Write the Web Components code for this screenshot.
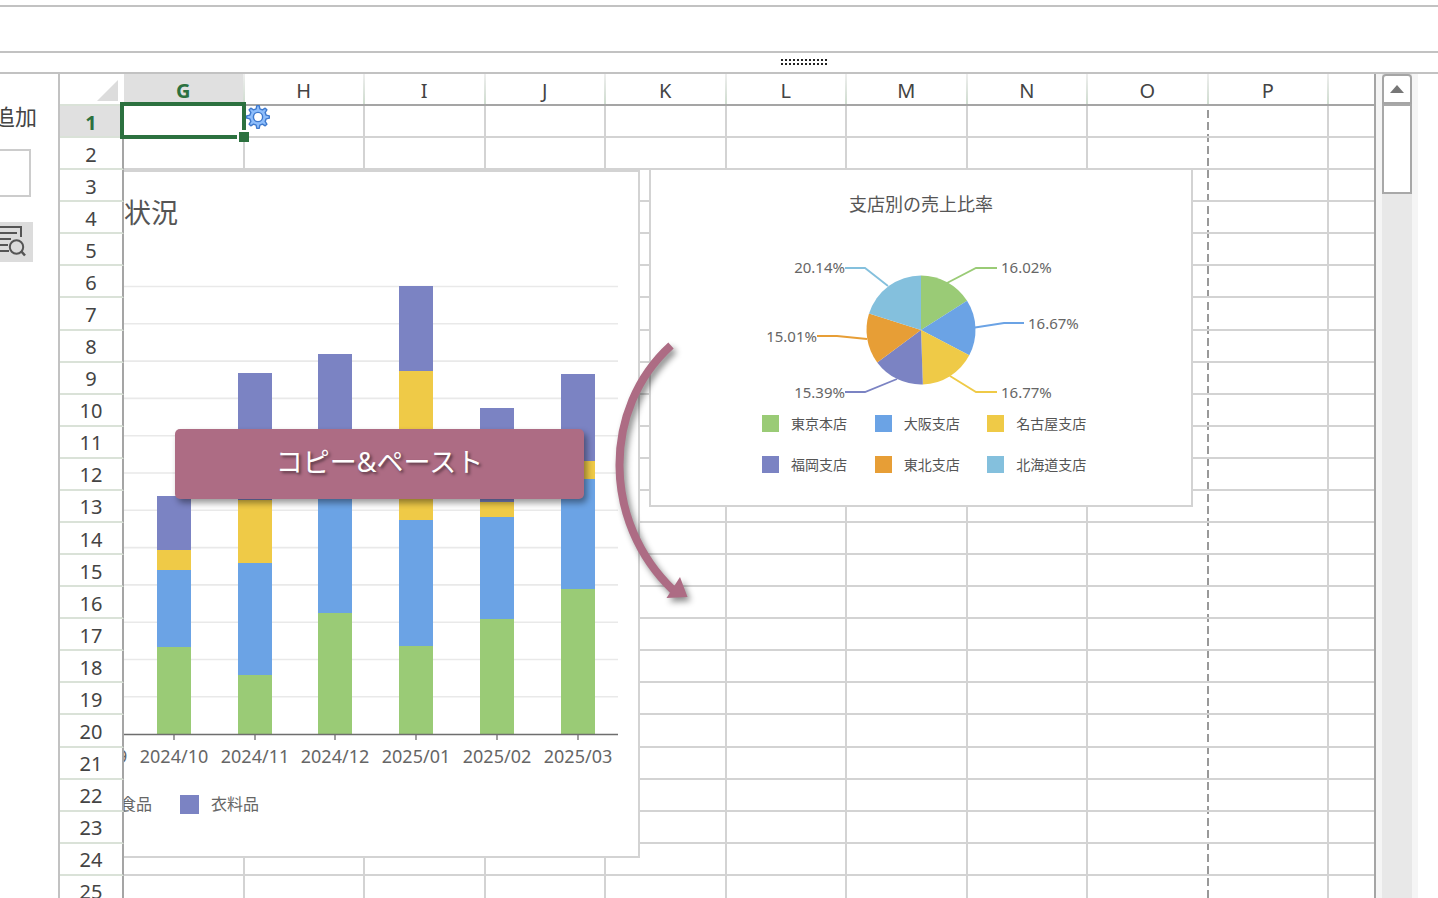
<!DOCTYPE html>
<html lang="ja">
<head>
    <meta charset="UTF-8">
    <meta name="viewport" content="width=device-width, initial-scale=1.0">
    <title>売上レポート</title>
    <style>
        body {
            margin: 0;
            background: #fff;
            color: #444;
            font-family: "Noto Sans", "Noto Sans CJK JP", sans-serif;
            --line: #d3d3d3;
            --frame: #c2c2c2;
            --green: #9acb76;
            --blue: #6ba3e5;
            --yellow: #efca47;
            --purple: #7b83c3;
            --orange: #e79e36;
            --sky: #84c0dd;
            --accent: #ad6c84;
        }
    </style>
</head>
<body>
    <template id="tpl-app">
        <style>
            :host {
                display: flex;
                flex-direction: column;
                height: 100vh;
                overflow: hidden;
            }

            .work {
                display: flex;
                flex: 1;
                min-height: 0;
            }
        </style>
        <slot name="bar"></slot>
        <div class="work"><slot></slot></div>
    </template>

    <template id="tpl-bar">
        <style>
            :host { display: block; }

            .formula {
                height: 44px;
                margin-top: 5px;
                border-top: 2px solid var(--frame);
                border-bottom: 2px solid var(--frame);
            }

            .splitter {
                display: flex;
                align-items: flex-start;
                height: 13px;
                padding: 6px 0 0 781px;
                border-bottom: 2px solid var(--frame);
            }
        </style>
        <div class="formula"></div>
        <div class="splitter">
            <svg width="48" height="6"></svg>
        </div>
    </template>

    <template id="tpl-side">
        <style>
            :host {
                display: flex;
                flex-direction: column;
                align-items: flex-end;
                box-sizing: border-box;
                flex: none;
                width: 60px;
                border-right: 2px solid var(--frame);
                overflow: hidden;
            }

            label {
                margin: 26px 21px 0 0;
                font-size: 22px;
                line-height: 32px;
                white-space: nowrap;
            }

            input {
                box-sizing: border-box;
                width: 120px;
                height: 48px;
                margin: 17px 27px 0 0;
                border: 2px solid #ccc;
                outline: none;
            }

            button {
                width: 40px;
                height: 40px;
                margin: 25px 25px 0 0;
                padding: 0;
                border: 0;
                background: #dcdcdc;
            }

            svg { display: block; }
        </style>
        <label for="field">追加</label>
        <input id="field" type="text">
        <button type="button" aria-label="検索">
            <svg width="40" height="40" viewBox="-7 222 40 40" fill="none" stroke="#555" stroke-width="2">
                <path d="M-7 227H21V237M-7 233H17M-7 239H11M-7 245H8M-7 251H9" />
                <circle cx="16.500" cy="247" r="6.700" />
                <path d="M21 251L25 255.500" stroke-width="2.500" />
            </svg>
        </button>
    </template>

    <template id="tpl-sheet">
        <style>
            :host {
                display: block;
                position: relative;
                flex: 1;
                min-width: 0;
                box-sizing: border-box;
                border-right: 2px solid #a5a5a5;
                overflow: hidden;
            }

            table {
                width: 100%;
                height: 834px;
                table-layout: fixed;
                border-collapse: separate;
                border-spacing: 0;
            }

            .rows { width: 64px; }
            .rest { width: 45px; }

            .page-end {
                background: repeating-linear-gradient(#999 0 8px, #fff 8px 12px) right top / 2px 100% no-repeat;
            }

            th, td {
                box-sizing: border-box;
                padding: 0;
            }

            th {
                padding-top: 3px;
                font-size: 20px;
                font-weight: 400;
                line-height: 20px;
                text-align: center;
            }

            thead tr { height: 32px; }

            thead th {
                padding-right: 2px;
                border-bottom: 2px solid #a5a5a5;
                background: linear-gradient(#eee, #cfdccf) right top / 2px 100% no-repeat #fff;
            }

            tbody th {
                border-right: 2px solid #a5a5a5;
                border-bottom: 2px solid #dae2d8;
                background: #fff;
            }

            td {
                border-right: 2px solid var(--line);
                border-bottom: 2px solid var(--line);
            }

            td.open { border-right: 0; }

            thead th.corner {
                background: #fff;
                border-bottom-color: #dae2d8;
            }

            .corner svg {
                display: block;
                margin-left: 37px;
            }

            thead th.on, tbody th.on {
                background-color: #e0e0e0;
                color: #2c713f;
                font-weight: 700;
            }

            td.picked { position: relative; }

            .cursor {
                position: absolute;
                z-index: 1;
                inset: -4px -3px -3px -4px;
                border: 4px solid #2c713f;
            }

            .handle {
                position: absolute;
                right: -7px;
                bottom: -7px;
                width: 10px;
                height: 10px;
                border: 1px solid #fff;
                border-width: 2px 0 0 2px;
                background: #2c713f;
            }

            .gear {
                position: absolute;
                z-index: 2;
                top: -1px;
                left: 100%;
                margin-left: 3px;
            }

            .floats {
                position: absolute;
                inset: 32px 0 0 64px;
                overflow: hidden;
                pointer-events: none;
            }
        </style>
        <table>
            <colgroup></colgroup>
            <thead></thead>
            <tbody></tbody>
        </table>
        <div class="floats"><slot></slot></div>
    </template>

    <template id="tpl-scroll">
        <style>
            :host {
                display: flex;
                flex-direction: column;
                flex: none;
                width: 30px;
                margin-right: 20px;
                border: solid #f5f5f5;
                border-width: 0 6px;
                background: #e8e8e8;
            }

            button {
                display: grid;
                place-items: center;
                box-sizing: border-box;
                height: 30px;
                padding: 0;
                border: 2px solid #a5a5a5;
                border-radius: 4px 4px 0 0;
                background: #fff;
            }

            .thumb {
                box-sizing: border-box;
                height: 90px;
                border: 2px solid #a8a8a8;
                background: #fff;
            }
        </style>
        <button type="button" aria-label="上へ">
            <svg width="16" height="8"><path d="M1 8L8 0L15 8Z" fill="#777" /></svg>
        </button>
        <div class="thumb"></div>
    </template>

    <template id="tpl-card">
        <style>
            :host {
                display: block;
                position: absolute;
                box-sizing: border-box;
                border: 2px solid var(--line);
                background: #fff;
            }
        </style>
        <slot></slot>
    </template>

    <template id="tpl-stacked">
        <style>
            :host { display: block; }

            h2 {
                margin: 0;
                padding: 23px 0 0 180px;
                font-size: 27px;
                font-weight: 400;
                line-height: 36px;
                color: #555;
            }

            svg { display: block; }

            text {
                font-size: 18px;
                fill: #666;
                text-anchor: middle;
            }

            .legend {
                display: flex;
                gap: 28px;
                padding-left: 145px;
                font-size: 16px;
                line-height: 24px;
                color: #666;
            }

            .legend span {
                display: flex;
                align-items: center;
                gap: 12px;
            }

            i {
                width: 19px;
                height: 19px;
            }
        </style>
        <h2>状況</h2>
        <svg width="694" height="561" viewBox="-56 231 694 561"></svg>
        <div class="legend">
            <span><i style="background: var(--yellow)"></i>食品</span>
            <span><i style="background: var(--purple)"></i>衣料品</span>
        </div>
    </template>

    <template id="tpl-pie">
        <style>
            :host { display: block; }

            h2 {
                margin: 0;
                padding-top: 22px;
                font-size: 18px;
                font-weight: 400;
                line-height: 24px;
                text-align: center;
                color: #555;
            }

            svg { display: block; }

            text {
                font-size: 15px;
                fill: #666;
            }

            .legend {
                display: grid;
                grid-template-columns: repeat(3, 1fr);
                grid-auto-rows: 41px;
                width: 338px;
                margin-left: 111px;
                font-size: 14px;
                line-height: 18px;
                color: #555;
                white-space: nowrap;
            }

            .legend span {
                display: flex;
                align-items: center;
                gap: 12px;
            }

            i {
                width: 17px;
                height: 17px;
            }
        </style>
        <h2>支店別の売上比率</h2>
        <svg width="540" height="187" viewBox="651 216 540 187"></svg>
        <div class="legend"></div>
    </template>

    <template id="tpl-callout">
        <style>
            :host {
                display: block;
                position: absolute;
                box-sizing: border-box;
                width: 409px;
                padding: 13px 0 17px;
                border-radius: 5px;
                background: var(--accent);
                box-shadow: 3px 4px 6px rgba(0, 0, 0, .4);
                color: #fff;
                font-size: 27px;
                line-height: 40px;
                text-align: center;
                text-shadow: 2px 2px 3px rgba(0, 0, 0, .5);
            }
        </style>
        <slot></slot>
    </template>

    <template id="tpl-arrow">
        <style>
            :host {
                display: block;
                position: absolute;
            }

            svg {
                display: block;
                filter: drop-shadow(3px 4px 3px rgba(0, 0, 0, .45));
            }
        </style>
        <svg width="100" height="280" viewBox="604 334 100 280">
            <path d="M671 345.500C602 408 602 522 673 590" fill="none" stroke="var(--accent)" stroke-width="8" />
            <path d="M680 577L687.500 597L666.500 598Z" fill="var(--accent)" />
        </svg>
    </template>

    <script>
        class BaseElement extends HTMLElement {
            constructor(id) {
                super()

                this.attachShadow({ mode: "open" })
                const tpl = document.getElementById(id)
                this.shadowRoot.append(tpl.content.cloneNode(true))
            }

            $(selector) {
                return this.shadowRoot.querySelector(selector)
            }
        }

        class ReportApp extends BaseElement {
            constructor() { super("tpl-app") }
        }

        class FormulaBar extends BaseElement {
            constructor() {
                super("tpl-bar")

                let dots = ""
                for (let i = 0; i < 12; i++) {
                    dots += `<path d="M${i * 4} 0h2v2h-2zM${i * 4} 4h2v2h-2z" fill="#222"/>`
                }
                this.$("svg").innerHTML = dots
            }
        }

        class SidePanel extends BaseElement {
            constructor() { super("tpl-side") }
        }

        class SheetGrid extends BaseElement {
            constructor() {
                super("tpl-sheet")

                const cols = [..."GHIJKLMNOP", ""]
                this.$("colgroup").innerHTML = `<col class="rows">` + cols.map(c =>
                    `<col class="${c === "O" ? "page-end" : c === "" ? "rest" : ""}">`).join("")

                this.$("thead").innerHTML = `<tr>
                    <th class="corner"><svg width="21" height="21"><path d="M21 0V21H0Z" fill="#dcdcdc"/></svg></th>
                    ${cols.map(c => `<th class="${c === "G" ? "on" : ""}"${c ? "" : ` style="background: #fff"`}>${c}</th>`).join("")}
                </tr>`

                let rows = ""
                for (let r = 1; r <= 25; r++) {
                    rows += `<tr><th class="${r === 1 ? "on" : ""}">${r}</th>`
                    for (const c of cols) {
                        if (r === 1 && c === "G") {
                            rows += `<td class="picked"><div class="cursor"><div class="handle"></div></div>${this.gear()}</td>`
                        } else {
                            rows += `<td class="${c === "O" || c === "" ? "open" : ""}"></td>`
                        }
                    }
                    rows += "</tr>"
                }
                this.$("tbody").innerHTML = rows
            }

            gear() {
                // 8 teeth, each one wider at its root
                const pts = []
                for (let i = 0; i < 8; i++) {
                    const teeth = [[-13, 8.4], [-6, 11.4], [6, 11.4], [13, 8.4]]
                    for (const [off, r] of teeth) {
                        const a = (i * 45 + off) * Math.PI / 180
                        pts.push(`${(12 + r * Math.sin(a)).toFixed(2)} ${(12 - r * Math.cos(a)).toFixed(2)}`)
                    }
                }
                return `<svg class="gear" width="24" height="24" stroke="#3e79cd" stroke-width="1.4" stroke-linejoin="round">
                    <path d="M${pts.join("L")}Z" fill="#8dbdfb"/>
                    <circle cx="12" cy="12" r="4.6" fill="#fff"/>
                </svg>`
            }
        }

        class ScrollTrack extends BaseElement {
            constructor() { super("tpl-scroll") }
        }

        class ChartCard extends BaseElement {
            constructor() { super("tpl-card") }
        }

        class StackedChart extends BaseElement {
            constructor() {
                super("tpl-stacked")

                const base = 734
                const colors = ["purple", "yellow", "blue", "green"]
                // label, centre, then the top edge of each segment
                const bars = [
                    ["2024/09", 93, 734, 734, 734, 734],
                    ["2024/10", 174, 496, 550, 570, 647],
                    ["2024/11", 255, 373, 500, 563, 675],
                    ["2024/12", 335, 354, 450, 480, 613],
                    ["2025/01", 416, 286, 371, 520, 646],
                    ["2025/02", 497, 408, 502, 517, 619],
                    ["2025/03", 578, 374, 461, 479, 589]
                ]

                let out = ""
                for (let i = 0; i < 12; i++) {
                    out += `<path d="M-56 ${286.5 + i * 37.3}H618" stroke="#e9e9e9" stroke-width="1.6"/>`
                }
                for (const [label, x, ...tops] of bars) {
                    tops.forEach((top, i) => {
                        const end = tops[i + 1] ?? base
                        out += `<rect x="${x - 17}" y="${top}" width="34" height="${end - top}" fill="var(--${colors[i]})"/>`
                    })
                    out += `<path d="M${x} 734v6" stroke="#777" stroke-width="1.4"/>`
                    out += `<text x="${x}" y="763">${label}</text>`
                }
                out += `<path d="M-56 734.5H618" stroke="#6e6e6e" stroke-width="1.4"/>`
                this.$("svg").innerHTML = out
            }
        }

        class PieChart extends BaseElement {
            constructor() {
                super("tpl-pie")

                const [cx, cy, r] = [921, 330, 54.5]
                const slices = [
                    ["東京本店", 16.02, "green", "M947 283L976 268H997", 1001, 273],
                    ["大阪支店", 16.67, "blue", "M975 327.5L1004 323H1024", 1028, 329],
                    ["名古屋支店", 16.77, "yellow", "M950 376L976 392H997", 1001, 398],
                    ["福岡支店", 15.39, "purple", "M897 379L865 392H845", 845, 398],
                    ["東北支店", 15.01, "orange", "M867 339L837 336H817", 817, 342],
                    ["北海道支店", 20.14, "sky", "M888 286L865 268H845", 845, 273]
                ]

                let from = 0
                let out = ""
                let legend = ""
                const at = p => {
                    const a = p / 100 * 2 * Math.PI
                    return `${cx + r * Math.sin(a)} ${cy - r * Math.cos(a)}`
                }
                slices.forEach(([name, share, color, lead, tx, ty], i) => {
                    out += `<path d="M${cx} ${cy}L${at(from)}A${r} ${r} 0 0 1 ${at(from + share)}Z" fill="var(--${color})"/>`
                    out += `<path d="${lead}" fill="none" stroke="var(--${color})" stroke-width="1.8"/>`
                    out += `<text x="${tx}" y="${ty}" text-anchor="${i < 3 ? "start" : "end"}">${share.toFixed(2)}%</text>`
                    legend += `<span><i style="background: var(--${color})"></i>${name}</span>`
                    from += share
                })
                this.$("svg").innerHTML = out
                this.$(".legend").innerHTML = legend
            }
        }

        class CalloutLabel extends BaseElement {
            constructor() { super("tpl-callout") }
        }

        class CurvedArrow extends BaseElement {
            constructor() { super("tpl-arrow") }
        }
    </script>

    <report-app>
        <formula-bar slot="bar"></formula-bar>
        <side-panel></side-panel>
        <sheet-grid>
            <chart-card style="left: -182px; top: 64px; width: 698px; height: 688px">
                <stacked-chart></stacked-chart>
            </chart-card>
            <chart-card style="left: 525px; top: 62px; width: 544px; height: 339px">
                <pie-chart></pie-chart>
            </chart-card>
            <callout-label style="left: 51px; top: 323px">コピー&amp;ペースト</callout-label>
            <curved-arrow style="left: 480px; top: 228px"></curved-arrow>
        </sheet-grid>
        <scroll-track></scroll-track>
    </report-app>

    <script>
        customElements.define("report-app", ReportApp)
        customElements.define("formula-bar", FormulaBar)
        customElements.define("side-panel", SidePanel)
        customElements.define("sheet-grid", SheetGrid)
        customElements.define("scroll-track", ScrollTrack)
        customElements.define("chart-card", ChartCard)
        customElements.define("stacked-chart", StackedChart)
        customElements.define("pie-chart", PieChart)
        customElements.define("callout-label", CalloutLabel)
        customElements.define("curved-arrow", CurvedArrow)
    </script>
</body>
</html>
